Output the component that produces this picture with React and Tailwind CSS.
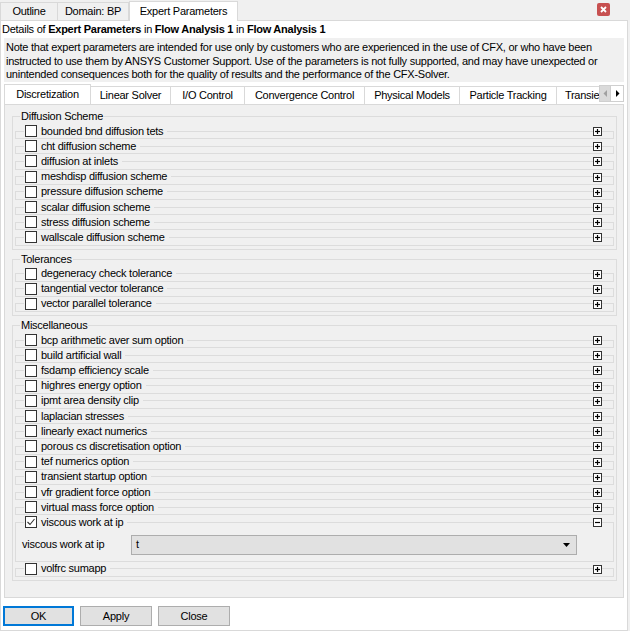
import React from 'react';

const diffusion = [
  'bounded bnd diffusion tets',
  'cht diffusion scheme',
  'diffusion at inlets',
  'meshdisp diffusion scheme',
  'pressure diffusion scheme',
  'scalar diffusion scheme',
  'stress diffusion scheme',
  'wallscale diffusion scheme',
];

const tolerances = [
  'degeneracy check tolerance',
  'tangential vector tolerance',
  'vector parallel tolerance',
];

const misc = [
  'bcp arithmetic aver sum option',
  'build artificial wall',
  'fsdamp efficiency scale',
  'highres energy option',
  'ipmt area density clip',
  'laplacian stresses',
  'linearly exact numerics',
  'porous cs discretisation option',
  'tef numerics option',
  'transient startup option',
  'vfr gradient force option',
  'virtual mass force option',
];

const innerTabs = [
  { name: 'Discretization', w: 'w-[87px]' },
  { name: 'Linear Solver', w: 'w-[80px]' },
  { name: 'I/O Control', w: 'w-[74px]' },
  { name: 'Convergence Control', w: 'w-[120px]' },
  { name: 'Physical Models', w: 'w-[95px]' },
  { name: 'Particle Tracking', w: 'w-[97px]' },
  { name: 'Transient', w: 'w-[60px]' },
];

function Checkbox({ checked }) {
  return (
    <span className="w-[12px] h-[12px] border border-[#333333] bg-white flex items-center justify-center shrink-0">
      {checked && (
        <svg width="10" height="10" viewBox="0 0 10 10">
          <path d="M1.5 5 L4 7.5 L8.5 2" fill="none" stroke="#333" strokeWidth="1.1" />
        </svg>
      )}
    </span>
  );
}

function ExpandBox({ open }) {
  return (
    <span className="absolute right-[12px] top-[3px] w-[9px] h-[9px] border border-[#333333] bg-white flex items-center justify-center">
      <svg width="7" height="7" viewBox="0 0 7 7">
        <path d="M1 3.5 H6" stroke="#000" strokeWidth="1.2" />
        {!open && <path d="M3.5 1 V6" stroke="#000" strokeWidth="1.2" />}
      </svg>
    </span>
  );
}

function OptionRow({ label, checked, open, children }) {
  return (
    <div className="relative">
      <fieldset className="border border-[#dcdcdc]">
        <legend className="ml-[8px] px-[1px] flex items-center gap-[4px] h-[14.2px]">
          <Checkbox checked={checked} />
          <span className="pr-[3px]">{label}</span>
        </legend>
        {children}
      </fieldset>
      <ExpandBox open={open} />
    </div>
  );
}

function Group({ title, children }) {
  return (
    <fieldset className="border border-[#dcdcdc] px-[2px] pb-[3px]">
      <legend className="ml-[5px] px-[1px] h-[13px] leading-[13px]">{title}</legend>
      <div className="pt-[1px]">{children}</div>
    </fieldset>
  );
}

function Button({ children, primary }) {
  return (
    <button
      className={
        primary
          ? 'w-[71px] h-[20px] bg-[#e1e1e1] border border-[#0078d7] outline outline-1 outline-[#0078d7] -outline-offset-2'
          : 'w-[72px] h-[20px] bg-[#e1e1e1] border border-[#adadad]'
      }
    >
      {children}
    </button>
  );
}

export default function App() {
  return (
    <div
      className="w-[630px] h-[631px] bg-[#f0f0f0] text-black text-[11px] leading-[13px] tracking-[-0.25px] flex flex-col overflow-hidden"
      style={{ fontFamily: '"Liberation Sans", Arial, sans-serif' }}
    >
      {/* top tabs */}
      <div className="h-[20px] flex items-end relative shrink-0">
        <div className="w-[58px] h-[18px] border border-b-0 border-[#d9d9d9] flex items-center justify-center">Outline</div>
        <div className="w-[71px] h-[18px] border border-b-0 border-l-0 border-[#d9d9d9] flex items-center justify-center">Domain: BP</div>
        <div className="w-[109px] h-[20px] bg-white border border-b-0 border-[#d9d9d9] flex items-center justify-center relative top-[1px]">
          Expert Parameters
        </div>
        <div className="flex-1 h-full flex items-start justify-end pr-[20px] pt-[3px]">
          <span className="w-[13px] h-[13px] bg-[#c75050] rounded-[2px] flex items-center justify-center">
            <svg width="7" height="7" viewBox="0 0 7 7">
              <path d="M1 1 L6 6 M6 1 L1 6" stroke="#fff" strokeWidth="1.8" />
            </svg>
          </span>
        </div>
      </div>

      {/* white page */}
      <div className="w-[628px] flex-1 bg-white border border-[#d9d9d9] flex flex-col">
        <div className="px-[1px] pt-[2px] h-[17px]">
          Details of <b>Expert Parameters</b> in <b>Flow Analysis 1</b> in <b>Flow Analysis 1</b>
        </div>
        <div className="mx-[3px] bg-[#f0f0f0] px-[2px] pt-[3px] pb-[3px] h-[44px] leading-[13.5px]">
          Note that expert parameters are intended for use only by customers who are experienced in the use of CFX, or who have been
          instructed to use them by ANSYS Customer Support. Use of the parameters is not fully supported, and may have unexpected or
          unintended consequences both for the quality of results and the performance of the CFX-Solver.
        </div>

        {/* inner tabs */}
        <div className="mx-[3px] mt-[2px] h-[20px] flex items-end">
          <div className="flex-1 flex items-end overflow-hidden">
            {innerTabs.map((t, i) => (
              <div
                key={t.name}
                className={
                  i === 0
                    ? `${t.w} shrink-0 h-[20px] bg-white border border-b-0 border-[#d9d9d9] flex items-center justify-center`
                    : `${t.w} shrink-0 h-[18px] border border-l-0 border-b-0 border-[#d9d9d9] flex items-center justify-center`
                }
              >
                {t.name}
              </div>
            ))}
          </div>
          <div className="flex h-[17px] mb-[2px]">
            <span className="w-[12px] h-full bg-[#dadada] border border-[#cfcfcf] flex items-center justify-center">
              <svg width="5" height="7" viewBox="0 0 5 7">
                <path d="M4 0 L0.5 3.5 L4 7 Z" fill="#a0a0a0" />
              </svg>
            </span>
            <span className="w-[13px] h-full bg-white border border-l-0 border-[#cfcfcf] flex items-center justify-center">
              <svg width="5" height="7" viewBox="0 0 5 7">
                <path d="M1 0 L4.5 3.5 L1 7 Z" fill="#000" />
              </svg>
            </span>
          </div>
        </div>

        {/* panel */}
        <div className="mx-[3px] h-[494px] bg-[#f0f0f0] border border-[#d9d9d9] pl-[7px] pr-[6px] pt-[5px] flex flex-col gap-[3px]">
          <Group title="Diffusion Scheme">
            {diffusion.map((l) => (
              <OptionRow key={l} label={l} />
            ))}
          </Group>
          <Group title="Tolerances">
            {tolerances.map((l) => (
              <OptionRow key={l} label={l} />
            ))}
          </Group>
          <Group title="Miscellaneous">
            {misc.map((l) => (
              <OptionRow key={l} label={l} />
            ))}
            <OptionRow label="viscous work at ip" checked open>
              <div className="flex items-center pl-[6px] pr-[36px] pt-[5px] pb-[6px]">
                <span className="w-[109px] shrink-0">viscous work at ip</span>
                <div className="flex-1 h-[20px] bg-[#e1e1e1] border border-[#adadad] flex items-center justify-between pl-[4px] pr-[6px]">
                  <span>t</span>
                  <svg width="7" height="4" viewBox="0 0 7 4">
                    <path d="M0 0 H7 L3.5 4 Z" fill="#000" />
                  </svg>
                </div>
              </div>
            </OptionRow>
            <OptionRow label="volfrc sumapp" />
          </Group>
        </div>

        {/* buttons */}
        <div className="flex gap-[6px] pl-[2px] pt-[8px]">
          <Button primary>OK</Button>
          <Button>Apply</Button>
          <Button>Close</Button>
        </div>
      </div>
    </div>
  );
}
